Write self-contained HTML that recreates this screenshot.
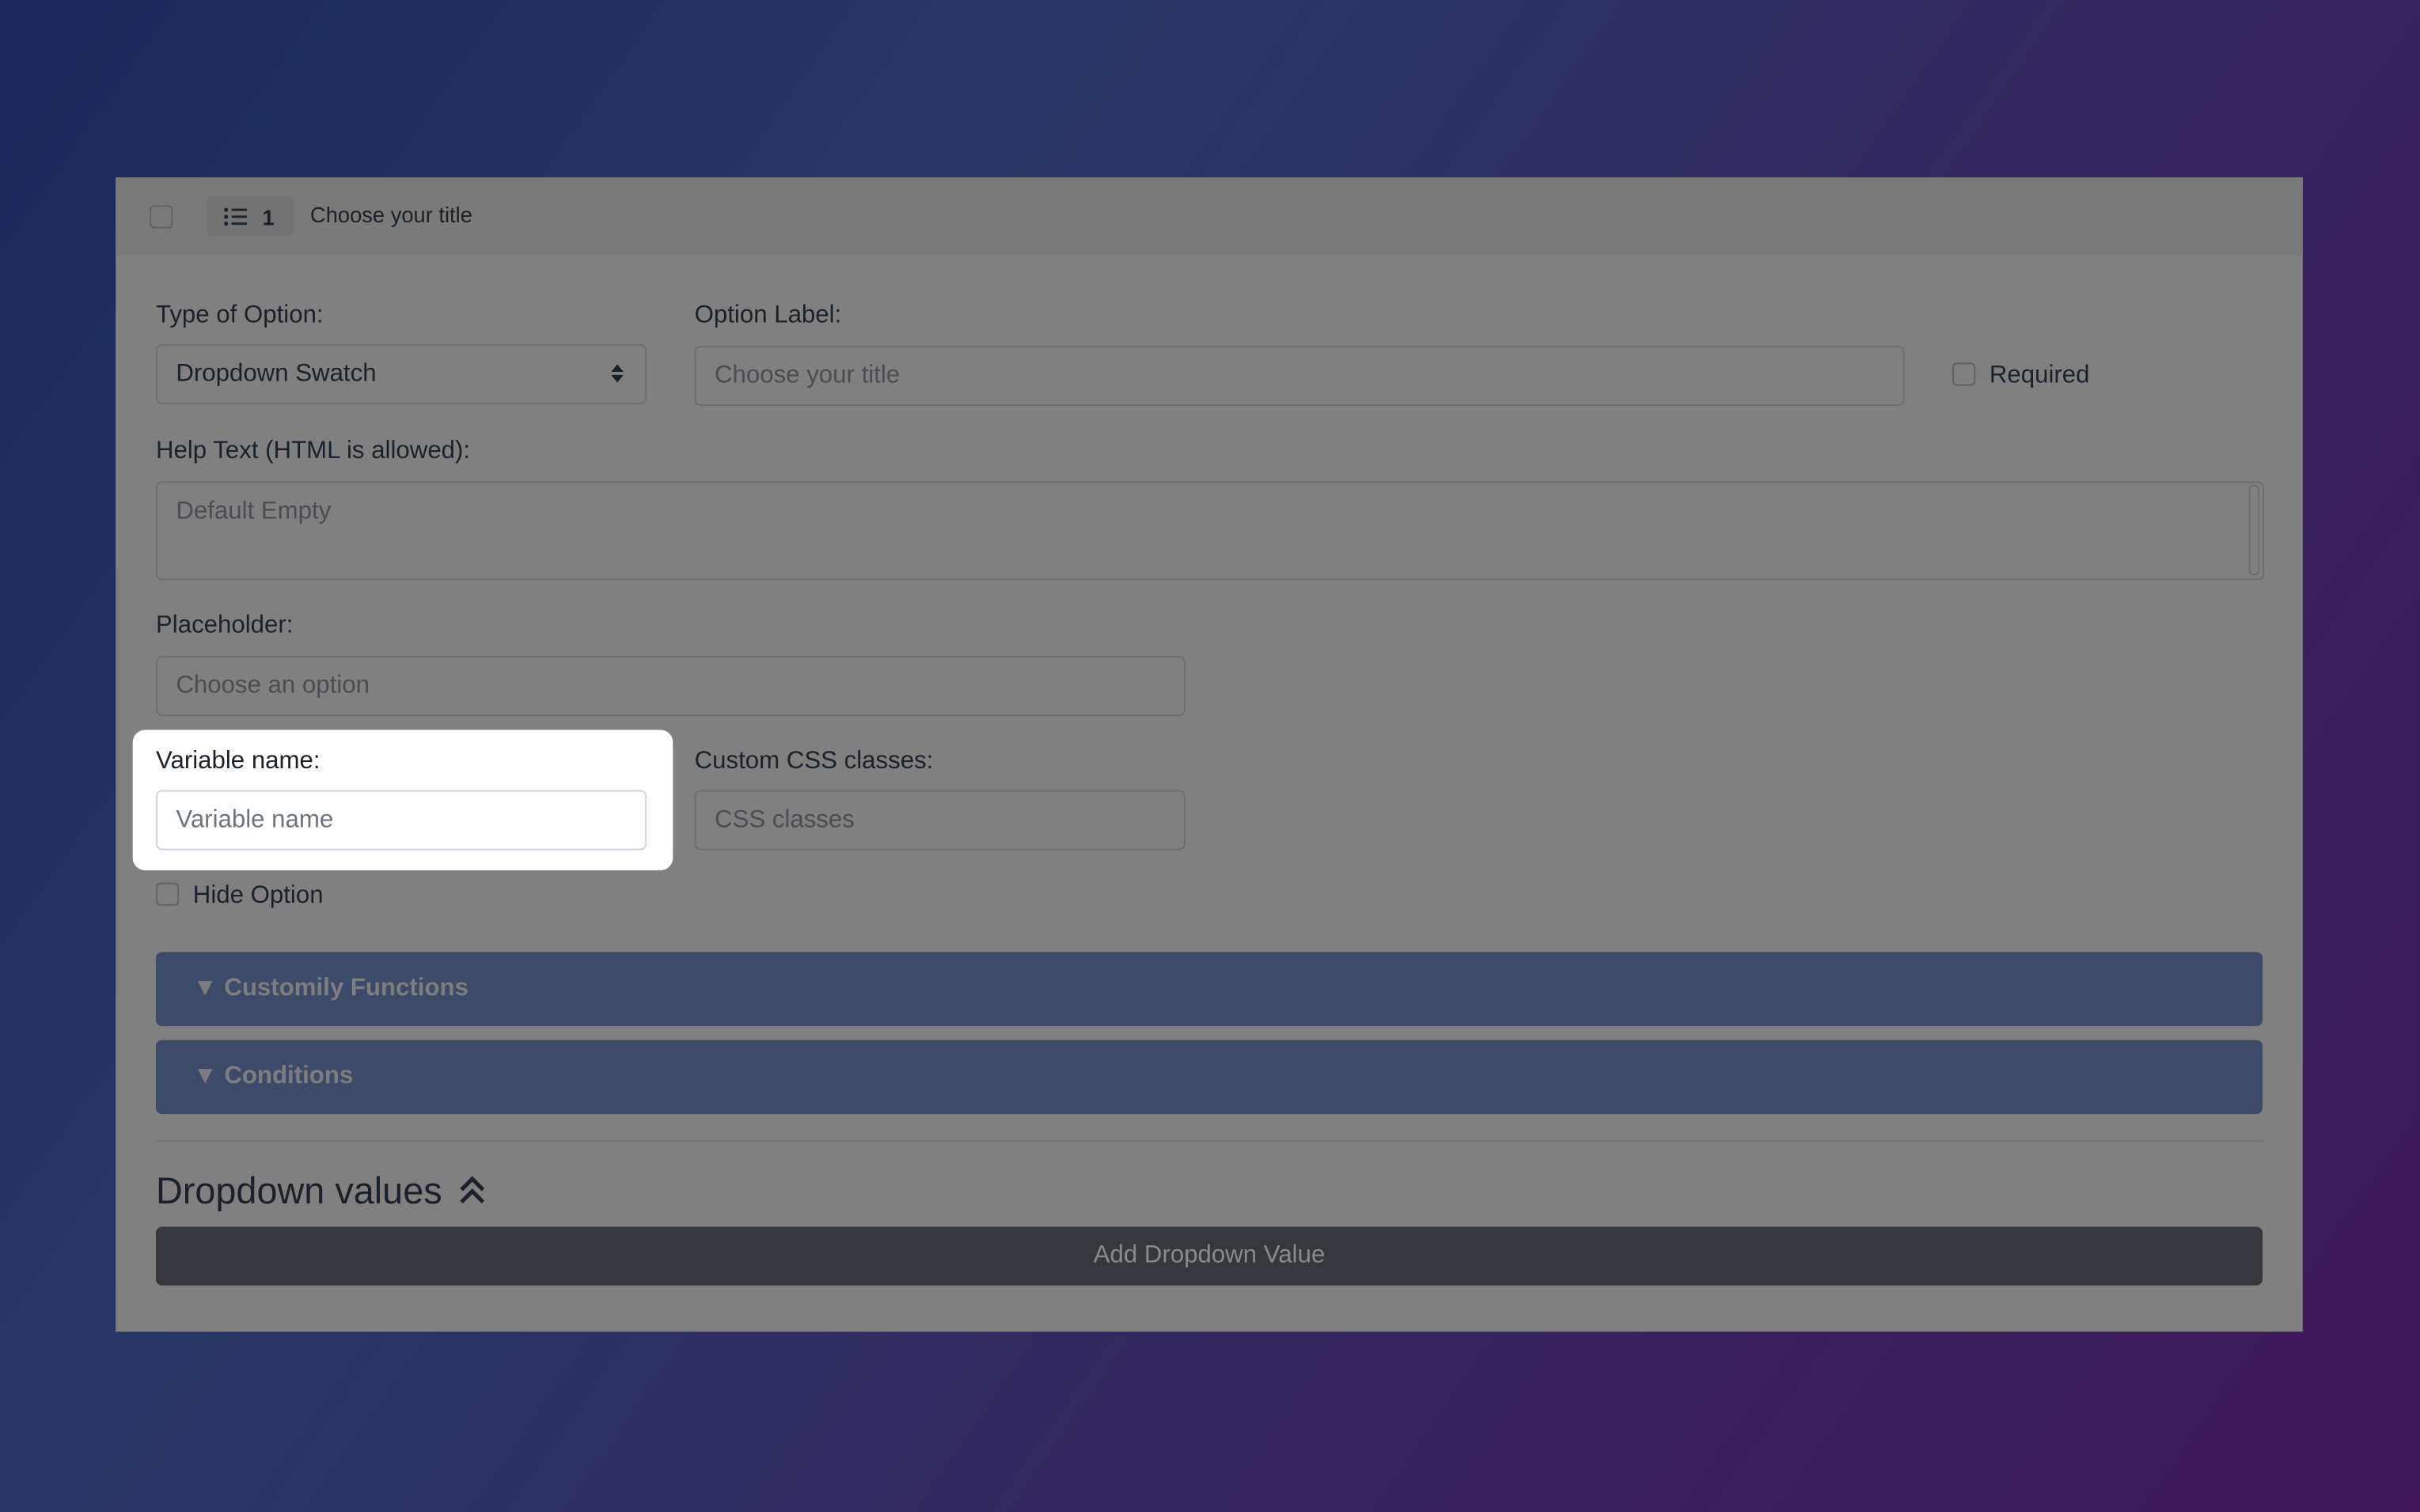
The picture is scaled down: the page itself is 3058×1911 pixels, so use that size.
<!DOCTYPE html>
<html><head><meta charset="utf-8"><style>
html,body{margin:0;padding:0;width:3058px;height:1911px;overflow:hidden}
body{background:linear-gradient(125deg,#19295e 0%,#263763 30%,#33295e 60%,#40175c 100%)}
#s{position:absolute;left:0;top:0;width:1568px;height:980px;transform:scale(1.95026);transform-origin:0 0;font-family:"Liberation Sans",sans-serif;color:#1b212b}
.a{position:absolute}
.panel{left:75px;top:115px;width:1417px;height:748px;background:#808080}
.hdr{left:75px;top:115px;width:1417px;height:50px;background:#7a7a7a}
.cb{position:absolute;width:13px;height:13px;border:1px solid #5f6368;border-radius:3px}
.lbl{position:absolute;font-size:16px;line-height:18px}
.inp{position:absolute;box-sizing:border-box;border:1px solid #6b6e72;border-radius:4px;font-size:16px;color:#4a4d52;padding-left:12px;display:flex;align-items:center}
.bar{position:absolute;left:101px;width:1365px;height:48px;background:#3e4a69;border-radius:4px;color:#7d7d7d;font-weight:bold;font-size:16px;display:flex;align-items:center;padding-left:24px;box-sizing:border-box}
</style></head><body><div id="s">
<div class="a panel"></div>
<div class="a hdr"></div>
<div class="cb" style="left:97px;top:133px"></div>
<div class="a" style="left:134px;top:127px;width:56px;height:26px;background:#737373;border-radius:4px"></div>
<svg class="a" style="left:145px;top:134px" width="16" height="13" viewBox="0 0 16 13"><g fill="#1b212b"><circle cx="1.5" cy="2" r="1.3"/><circle cx="1.5" cy="6.5" r="1.3"/><circle cx="1.5" cy="11" r="1.3"/><rect x="5" y="1.2" width="10" height="1.5"/><rect x="5" y="5.7" width="10" height="1.5"/><rect x="5" y="10.2" width="10" height="1.5"/></g></svg>
<div class="lbl" style="left:170px;top:132px;font-size:14px;font-weight:bold">1</div>
<div class="lbl" style="left:201px;top:130px;font-size:14px">Choose your title</div>

<div class="lbl" style="left:101px;top:196px">Type of Option:</div>
<div class="inp" style="left:101px;top:223px;width:318px;height:39px;color:#1b212b">Dropdown Swatch</div>
<svg class="a" style="left:396px;top:236px" width="8" height="12" viewBox="0 0 8 12"><path d="M4 0L8 5H0Z M4 12L0 7H8Z" fill="#1b212b"/></svg>
<div class="lbl" style="left:450px;top:196px">Option Label:</div>
<div class="inp" style="left:450px;top:224px;width:784px;height:39px">Choose your title</div>
<div class="cb" style="left:1265px;top:235px"></div>
<div class="lbl" style="left:1289px;top:235px">Required</div>

<div class="lbl" style="left:101px;top:284px">Help Text (HTML is allowed):</div>
<div class="inp" style="left:101px;top:312px;width:1366px;height:64px;align-items:flex-start;padding-top:10px">Default Empty</div>
<div class="a" style="left:1457px;top:314px;width:7px;height:59px;border:1px solid #6b6e72;border-radius:4px;box-sizing:border-box"></div>

<div class="lbl" style="left:101px;top:397px">Placeholder:</div>
<div class="inp" style="left:101px;top:425px;width:667px;height:39px">Choose an option</div>

<div class="a" style="left:86px;top:473px;width:350px;height:91px;background:#fff;border-radius:8px"></div>
<div class="lbl" style="left:101px;top:485px">Variable name:</div>
<div class="inp" style="left:101px;top:512px;width:318px;height:39px;border-color:#ced4da;color:#6c757d">Variable name</div>
<div class="lbl" style="left:450px;top:485px">Custom CSS classes:</div>
<div class="inp" style="left:450px;top:512px;width:318px;height:39px">CSS classes</div>

<div class="cb" style="left:101px;top:572px"></div>
<div class="lbl" style="left:125px;top:572px">Hide Option</div>

<div class="bar" style="top:617px">▼ Customily Functions</div>
<div class="bar" style="top:674px">▼ Conditions</div>
<div class="a" style="left:101px;top:739px;width:1365px;height:1px;background:#727272"></div>
<div class="lbl" style="left:101px;top:760px;font-size:24px;line-height:26px">Dropdown values</div>
<svg class="a" style="left:297px;top:762px" width="18" height="19" viewBox="0 0 18 19"><path d="M2 9L9 2L16 9M2 17L9 10L16 17" fill="none" stroke="#1b212b" stroke-width="2.6"/></svg>
<div class="a" style="left:101px;top:795px;width:1365px;height:38px;background:#35383d;border-radius:4px;color:#8a8a8a;font-size:16px;display:flex;align-items:center;justify-content:center">Add Dropdown Value</div>
</div></body></html>
